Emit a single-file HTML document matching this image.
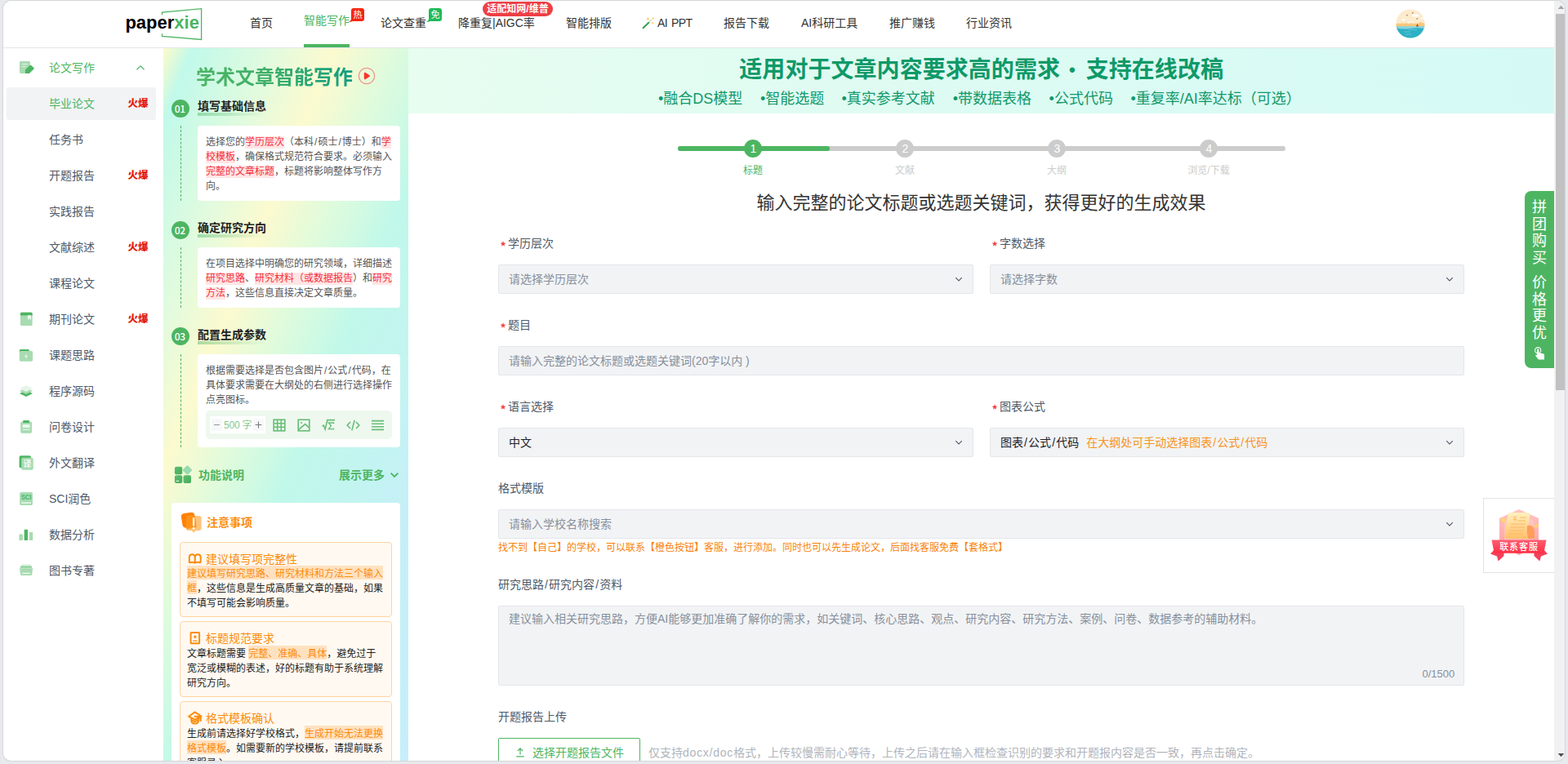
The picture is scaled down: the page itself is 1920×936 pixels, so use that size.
<!DOCTYPE html>
<html lang="zh-CN">
<head>
<meta charset="utf-8">
<title>paperxie 智能写作</title>
<style>
*{box-sizing:border-box;margin:0;padding:0}
html,body{width:1920px;height:936px;overflow:hidden}
body{background:#e7e9ec;font-family:"Liberation Sans","Noto Sans CJK SC",sans-serif;font-size:14px;color:#4e5969;position:relative}
.topline{position:absolute;left:0;top:0;width:1920px;height:1px;background:#d3d5d8}
.win{position:absolute;left:4px;top:1px;width:1912px;height:931px;background:#fff;border-radius:10px;overflow:hidden;box-shadow:0 0 0 1px #d5d6da}
.pg{position:absolute;left:-4px;top:-1px;width:1920px;height:936px}
.abs{position:absolute}
.t{position:absolute;white-space:nowrap;line-height:20px;height:20px}
/* header */
.hdr{position:absolute;left:0;top:0;width:1903px;height:59px;background:#fff;border-bottom:1px solid #e5e6eb}
.nav{position:absolute;top:18px;font-size:14px;line-height:20px;color:#333;white-space:nowrap}
.nav.on{color:#4db562;top:15px}
.logo{position:absolute;left:153.400px;top:14.500px;font-size:22px;line-height:26px;font-weight:700;color:#000;letter-spacing:0;white-space:nowrap}
.logo span{color:#4db562}
.badge{position:absolute;width:16px;height:16px;border-radius:3px;color:#fff;font-size:11px;line-height:16px;text-align:center;font-weight:400}
.pill{position:absolute;left:591px;top:2px;width:86px;height:18px;border-radius:9px;background:#ee3f45;color:#fff;font-size:12px;line-height:18px;text-align:center;font-weight:700;letter-spacing:0;white-space:nowrap}
/* sidebar */
.side{position:absolute;left:4px;top:59px;width:196px;height:873px;background:#fff}
.si{position:absolute;left:60px;font-size:14px;line-height:20px;color:#4e5969;white-space:nowrap}
.hot{position:absolute;left:156.500px;font-size:12.5px;line-height:20px;color:#e31b0f;font-weight:900;white-space:nowrap;letter-spacing:0}
.ico{position:absolute;left:23px;width:20px;height:20px}
/* scrollbar */
.sb{position:absolute;left:1903px;top:0;width:17px;height:936px;background:#f1f1f1}
.sb i{position:absolute;left:2px;top:17px;width:13px;height:461px;background:#c1c1c1}
</style>
</head>
<body>
<div class="win"><div class="pg">

<!-- HEADER -->
<div class="hdr">
  <svg class="abs" style="left:196px;top:8px" width="54" height="44" viewBox="0 0 54 44"><path d="M2.500 10.200V7L50.600 2.600V40.500L2.500 36.500V33.200" fill="none" stroke="#4db562" stroke-width="1.3"/></svg>
  <div class="logo">paper<span>xie</span></div>
  <div class="nav" style="left:306px">首页</div>
  <div class="nav on" style="left:372px">智能写作</div>
  <div class="abs" style="left:372px;top:54px;width:56px;height:4px;background:#4db562"></div>
  <div class="badge" style="left:430px;top:10px;background:#f5270f">热</div>
  <svg class="abs" style="left:426px;top:21px" width="8" height="6" viewBox="0 0 8 6"><path d="M4.500 0 L8 4.500 L0 6.500 Q4.500 4.500 4.500 0Z" fill="#f5270f"/></svg>
  <div class="nav" style="left:466px">论文查重</div>
  <div class="badge" style="left:525px;top:10px;background:#1fba5a">免</div>
  <svg class="abs" style="left:521px;top:21px" width="8" height="6" viewBox="0 0 8 6"><path d="M4.500 0 L8 4.500 L0 6.500 Q4.500 4.500 4.500 0Z" fill="#1fba5a"/></svg>
  <div class="nav" style="left:561px">降重复|AIGC率</div>
  <div class="pill">适配知网/维普</div>
  <div class="nav" style="left:693px">智能排版</div>
  <svg class="abs" style="left:786px;top:20px" width="16" height="16" viewBox="0 0 16 16">
    <path d="M1.600 14.200 8.400 7.600" stroke="#2fa04a" stroke-width="2" stroke-linecap="round"/>
    <path d="M8.800 7.200 12 4" stroke="#dedede" stroke-width="2.100" stroke-linecap="butt"/>
    <path d="M7.400 1.100l.6 1.400 1.400.6-1.400.6-.6 1.400-.6-1.400-1.400-.6 1.400-.6zM13.700.7l.5 1.200 1.200.5-1.200.5-.5 1.200-.5-1.200-1.200-.5 1.200-.5zM13 6.500l.5 1.100 1.100.5-1.100.5-.5 1.100-.5-1.100-1.100-.5 1.100-.5z" fill="#fbc53d"/>
  </svg>
  <div class="nav" style="left:805px;letter-spacing:-.6px;word-spacing:1.600px">AI PPT</div>
  <div class="nav" style="left:886px">报告下载</div>
  <div class="nav" style="left:981px">AI科研工具</div>
  <div class="nav" style="left:1089px">推广赚钱</div>
  <div class="nav" style="left:1183px">行业资讯</div>
  <svg class="abs" style="left:1709px;top:11px" width="36" height="36" viewBox="0 0 36 36">
    <defs><clipPath id="av"><circle cx="18" cy="18" r="17.6"/></clipPath></defs>
    <g clip-path="url(#av)">
      <rect width="36" height="36" fill="#fdebcd"/>
      <circle cx="18" cy="19" r="4.5" fill="#fff3df"/>
      <path d="M0 18.5 Q3 17 6 18 Q8 16.5 10 18 Q13 16.5 16 18 Q19 16.5 22 18 Q25 17 27 18 Q30 15 34 17.5 L36 18 V23 H0Z" fill="#fbc67a"/>
      <rect y="21" width="36" height="15" fill="#2bb1c6"/>
      <path d="M0 21 H36 V24 Q26 22.5 18 24 Q8 25.5 0 23Z" fill="#8ed3dc"/>
      <ellipse cx="24" cy="8" rx="4.5" ry="1.6" fill="#fff"/><ellipse cx="9.5" cy="13.2" rx="2.6" ry="1" fill="#fff"/><ellipse cx="32.5" cy="11.5" rx="2" ry=".9" fill="#fff"/>
      <path d="M25 21.5 l1.6-3.4 1.4 3.4z" fill="#a1491f"/>
      <path d="M13 8.3l1.6-1M20 5.3l1.6-1M25.5 12.4l1.6-1" stroke="#5a4a3a" stroke-width=".9"/>
      <path d="M10 28h8M16 25.5h10M12 31h7" stroke="#6cc7d4" stroke-width=".8"/>
    </g>
  </svg>
</div>

<!-- SIDEBAR -->
<div class="side"></div>
<div id="sidebar">
  <div class="abs" style="left:8px;top:107px;width:183px;height:40px;background:#f2f3f5;border-radius:3px"></div>
  <div class="si" style="top:73px;color:#4db562">论文写作</div>
  <svg class="abs" style="left:166px;top:78px" width="12" height="10" viewBox="0 0 12 10"><path d="M1.5 7.2 6 2.8l4.5 4.4" fill="none" stroke="#4db562" stroke-width="1.2"/></svg>
  <div class="si" style="top:117px;color:#4db562">毕业论文</div><div class="hot" style="top:117px">火爆</div>
  <div class="si" style="top:161px">任务书</div>
  <div class="si" style="top:205px">开题报告</div><div class="hot" style="top:205px">火爆</div>
  <div class="si" style="top:249px">实践报告</div>
  <div class="si" style="top:293px">文献综述</div><div class="hot" style="top:293px">火爆</div>
  <div class="si" style="top:337px">课程论文</div>
  <div class="si" style="top:381px">期刊论文</div><div class="hot" style="top:381px">火爆</div>
  <div class="si" style="top:425px">课题思路</div>
  <div class="si" style="top:469px">程序源码</div>
  <div class="si" style="top:513px">问卷设计</div>
  <div class="si" style="top:557px">外文翻译</div>
  <div class="si" style="top:601px">SCI润色</div>
  <div class="si" style="top:645px">数据分析</div>
  <div class="si" style="top:689px">图书专著</div>

  <svg class="abs" style="left:14px;top:64px" width="40" height="40" viewBox="0 0 40 40"><rect x="10" y="11" width="12.900" height="14.900" rx="1.400" fill="#a8dbb2"/><path d="M13 14.500h7M13 17.400h4.700" stroke="#e4f4e7" stroke-width="1"/><path d="M16.900 25.900V21.400L22.600 16.100Q23.500 15.500 24.400 16.200L27.600 19.300Q28.100 19.850 27.500 20.400L21.800 25.900Z" fill="#4db562"/></svg>
  <svg class="abs" style="left:14px;top:372px" width="40" height="40" viewBox="0 0 40 40"><rect x="10.900" y="10.700" width="14.700" height="16.200" rx="1.500" fill="#a8dbb2"/><path d="M10.900 14.500V12.200Q10.900 10.700 12.400 10.700H24.100Q25.600 10.700 25.600 12.200V14.500Z" fill="#4db562"/><path d="M19.900 14.200H23.900V19.800L21.900 18.600 19.900 19.800Z" fill="#edf8ef"/></svg>
  <svg class="abs" style="left:14px;top:416px" width="40" height="40" viewBox="0 0 40 40"><path d="M9.800 15V13.500Q9.800 12 11.300 12H20.500Q22 12 22 13.500V15Z" fill="#4db562"/><rect x="9.800" y="14.100" width="16.300" height="12.600" rx="1.600" fill="#a8dbb2"/><path d="M18.700 17 16 21h1.800l-.7 3.200 2.900-4.200h-1.900z" fill="#edf8ef"/></svg>
  <svg class="abs" style="left:14px;top:460px" width="40" height="40" viewBox="0 0 40 40"><path d="M10 22 18 18 26 22 18 26Z" fill="#4db562"/><path d="M10 19 18 15 26 19 18 23Z" fill="#a8dbb2"/><path d="M10 16 18 12 26 16 18 20Z" fill="#e6f5e9"/></svg>
  <svg class="abs" style="left:14px;top:504px" width="40" height="40" viewBox="0 0 40 40"><rect x="11.200" y="12.600" width="13.800" height="14.100" rx="1.600" fill="#a8dbb2"/><rect x="14.100" y="10.900" width="7.900" height="3" rx="1" fill="#4db562"/><rect x="13.700" y="16" width="8.900" height="3.900" fill="#eef8f0"/><rect x="13.700" y="21.800" width="8.900" height="1.100" fill="#eef8f0"/></svg>
  <svg class="abs" style="left:14px;top:548px" width="40" height="40" viewBox="0 0 40 40"><rect x="9.600" y="10.300" width="14.300" height="14.900" rx="1.800" fill="#4db562"/><rect x="12.200" y="12.800" width="14.500" height="15" rx="1.800" fill="#a8dbb2"/><text x="19.450" y="24" text-anchor="middle" font-size="10" font-weight="700" fill="#f2faf4" font-family="Liberation Sans, Noto Sans CJK SC, sans-serif">译</text></svg>
  <svg class="abs" style="left:14px;top:592px" width="40" height="40" viewBox="0 0 40 40"><rect x="10.200" y="11" width="15.700" height="15.900" rx="1.600" fill="#a8dbb2"/><text x="11.700" y="19.900" font-size="9.500" font-weight="700" fill="#4db562" textLength="12.700" lengthAdjust="spacingAndGlyphs" font-family="Liberation Sans, sans-serif">SCI</text><rect x="12.200" y="23.300" width="11.700" height="1.500" fill="#eef8f0"/></svg>
  <svg class="abs" style="left:14px;top:636px" width="40" height="40" viewBox="0 0 40 40"><rect x="9.400" y="18.400" width="4.500" height="7.500" rx=".6" fill="#a8dbb2"/><rect x="15.600" y="12.800" width="4.500" height="13.100" rx=".6" fill="#4db562"/><rect x="21.800" y="16" width="4.400" height="9.900" rx=".6" fill="#a8dbb2"/></svg>
  <svg class="abs" style="left:14px;top:680px" width="40" height="40" viewBox="0 0 40 40"><rect x="12" y="12" width="12.100" height="1.100" fill="#a8dbb2"/><rect x="10.700" y="13.900" width="14.500" height="1.300" rx=".6" fill="#4db562"/><path d="M10 16H26.100L25.200 23.700Q25 25 23.700 25H12.500Q11.200 25 11 23.700Z" fill="#a8dbb2"/><rect x="12.800" y="21.800" width="10.300" height="1.300" rx=".6" fill="#eef8f0"/></svg>

</div>


<!-- LEFT GUIDE PANEL -->
<style>
.pn{position:absolute;left:199.5px;top:59px;width:300.5px;height:873px;background:linear-gradient(112deg,#fdfbc9 0%,#c1f9ea 5.5%,#e2fbde 21%,#fcfacf 32%,#e0fbdc 43%,#d0fae3 50%,#c0f8ea 56%,#c3f5f0 68%,#c5f0f7 80%,#c7eefa 100%)}
.ptitle{position:absolute;left:240px;top:79px;font-size:24px;line-height:32px;font-weight:700;white-space:nowrap;background:linear-gradient(90deg,#4db562 0%,#3fae6a 45%,#0f9d82 100%);-webkit-background-clip:text;background-clip:text;color:transparent}
.num{position:absolute;left:210px;width:22px;height:22px;border-radius:50%;background:#4db562;color:#fff;font-size:12px;line-height:22px;text-align:center;letter-spacing:-.3px;font-family:"Noto Sans CJK SC","Liberation Sans",sans-serif;font-weight:500;padding-right:1.500px}
.stt{position:absolute;left:242px;font-size:14px;line-height:20px;font-weight:700;color:#222;white-space:nowrap}
.stu{position:absolute;left:242px;width:84px;height:4px;background:linear-gradient(90deg,rgba(77,181,98,.45),rgba(77,181,98,.12) 70%,rgba(77,181,98,0))}
.dash{position:absolute;left:221px;width:0;border-left:1px dashed #4db562}
.card{position:absolute;left:242px;width:248px;background:#fff;border-radius:4px;padding:11px 8px 9px 10px;font-size:12px;line-height:18px;color:#555}
.card b{font-weight:400;color:#f5313d;background:#ffe5e5;padding-bottom:1px}
.tool{position:absolute;left:252px;top:503px;width:228px;height:35px;background:#eef8ef;border-radius:5px}
.ncard{position:absolute;left:210px;top:616px;width:280px;height:330px;background:#fff;border-radius:4px}
.sub{position:absolute;left:220px;width:260px;background:#fff9f1;border:1px solid #ffd3a0;border-radius:4px}
.sub h4{position:absolute;left:31px;top:9.500px;font-size:14px;line-height:20px;font-weight:400;color:#fb8c0c;white-space:nowrap}
.sub p{position:absolute;left:8px;top:28.500px;width:242px;font-size:12px;line-height:18px;color:#222}
.sub p b{font-weight:400;color:#fb8c0c;background:#ffe1c0;padding-top:3px}
</style>
<div class="pn"></div>
<div class="ptitle">学术文章智能写作</div>
<svg class="abs" style="left:438px;top:82px" width="22" height="22" viewBox="0 0 22 22"><circle cx="11" cy="11" r="9.700" fill="none" stroke="#f0948a" stroke-width="1.300"/><path d="M9 8 13.600 11 9 14Z" fill="#fb352c" stroke="#fb352c" stroke-width="2.400" stroke-linejoin="round"/></svg>

<div class="num" style="top:122px">01</div>
<div class="stt" style="top:120px">填写基础信息</div><div class="stu" style="top:137.5px"></div>
<div class="dash" style="top:154px;height:92px"></div>
<div class="card" style="top:154px;height:92px">选择您的<b>学历层次</b>（本科<span style="margin:0 1px">/</span>硕士<span style="margin:0 1px">/</span>博士）和<b>学校模板</b>，确保格式规范符合要求。必须输入<b>完整的文章标题</b>，标题将影响整体写作方向。</div>

<div class="num" style="top:270.5px">02</div>
<div class="stt" style="top:269px">确定研究方向</div><div class="stu" style="top:286.5px"></div>
<div class="dash" style="top:303px;height:74px"></div>
<div class="card" style="top:303px;height:74px">在项目选择中明确您的研究领域，详细描述<b>研究思路</b>、<b>研究材料（或数据报告</b>）和<b>研究方法</b>，这些信息直接决定文章质量。</div>

<div class="num" style="top:401px">03</div>
<div class="stt" style="top:400px">配置生成参数</div><div class="stu" style="top:417.5px"></div>
<div class="dash" style="top:434px;height:114px"></div>
<div class="card" style="top:434px;height:114px">根据需要选择是否包含图片<span style="margin:0 1px">/</span>公式<span style="margin:0 1px">/</span>代码，在具体要求需要在大纲处的右侧进行选择操作点亮图标。</div>
<div class="tool"></div>
<div class="abs" style="left:257px;top:510px;width:68px;height:21px;background:#fff"></div>
<div class="abs" style="left:259px;top:513px;width:13px;height:15px;background:#f7f8fa"></div>
<div class="abs" style="left:310px;top:513px;width:13px;height:15px;background:#f7f8fa"></div>
<svg class="abs" style="left:261px;top:516px" width="9" height="9" viewBox="0 0 9 9"><path d="M1 4.5h7" stroke="#999" stroke-width="1.1"/></svg>
<svg class="abs" style="left:312px;top:516px" width="9" height="9" viewBox="0 0 9 9"><path d="M.6 4.5h7.8M4.5 .6v7.8" stroke="#777" stroke-width="1.1"/></svg>
<div class="t" style="left:274px;top:511px;font-size:12px;color:#84c98f;letter-spacing:-.2px">500 字</div>
<!-- toolbar icons -->
<svg class="abs" style="left:334px;top:513px" width="16" height="16" viewBox="0 0 16 16"><g fill="none" stroke="#67bd76" stroke-width="1.6"><rect x="1.2" y="1.2" width="13.6" height="13.6"/><path d="M1.2 5.7h13.6M1.2 10.3h13.6M5.7 1.2v13.6M10.3 1.2v13.6"/></g></svg>
<svg class="abs" style="left:364px;top:513px" width="16" height="16" viewBox="0 0 16 16"><g fill="none" stroke="#67bd76" stroke-width="1.6"><rect x="1.2" y="1.2" width="13.6" height="13.6"/><path d="M1.4 13.6 9.6 6.6l5.2 4.6"/></g><circle cx="5.2" cy="5" r="1.1" fill="#6dc07b"/></svg>
<svg class="abs" style="left:394px;top:513px" width="17" height="16" viewBox="0 0 17 16"><g fill="none" stroke="#67bd76" stroke-width="1.6"><path d="M.6 9 2.2 8.2 4.2 13 6.8 1.6H16"/><path d="M14.6 6.2V5H8.4l3 3.8-3 3.8h6.2v-1.2" stroke-width="1.3"/></g></svg>
<svg class="abs" style="left:424px;top:513px" width="17" height="16" viewBox="0 0 17 16"><g fill="none" stroke="#67bd76" stroke-width="1.6"><path d="M5 4 1.2 8 5 12M12 4l3.8 4L12 12M10.2 1.8 6.8 14.4"/></g></svg>
<svg class="abs" style="left:454px;top:513px" width="17" height="16" viewBox="0 0 17 16"><path d="M1 2.6h15M1 6.2h15M1 9.8h15M1 13.4h15" stroke="#67bd76" stroke-width="1.6"/></svg>

<!-- 功能说明 -->
<svg class="abs" style="left:213px;top:570px" width="23" height="24" viewBox="0 0 23 24">
  <defs><linearGradient id="gq" x1="0" y1="0" x2="1" y2="1"><stop offset="0" stop-color="#5cbd70"/><stop offset="1" stop-color="#45ad5b"/></linearGradient></defs>
  <rect x=".9" y="1.700" width="9.300" height="9.500" rx="2" fill="url(#gq)"/>
  <rect x=".9" y="12.300" width="9.300" height="9.700" rx="2" fill="url(#gq)"/>
  <rect x="11.500" y="12.300" width="9.500" height="9.700" rx="2" fill="url(#gq)"/>
  <rect x="12" y="1.500" width="8.800" height="8.800" rx="1.800" fill="#98dbae" transform="rotate(45 16.400 5.900)"/>
  <path d="M3.200 19.200h2.400" stroke="#fff" stroke-width="1.100" stroke-linecap="round"/>
</svg>
<div class="t" style="left:243px;top:572px;font-weight:700;color:#4db562">功能说明</div>
<div class="t" style="left:415px;top:572px;font-weight:700;color:#4db562">展示更多</div>
<svg class="abs" style="left:477px;top:577px" width="12" height="10" viewBox="0 0 12 10"><path d="M1.6 2.6 6 7l4.4-4.4" fill="none" stroke="#4db562" stroke-width="1.8"/></svg>

<!-- 注意事项 -->
<div class="ncard"></div>
<svg class="abs" style="left:221px;top:627px" width="27" height="27" viewBox="0 0 27 27">
  <rect x="1.600" y="1.300" width="16.500" height="17.500" rx="4" fill="#ff8206" transform="rotate(-9 10 10)"/>
  <path d="M10 5H22.600Q25.600 5 25.600 8V20Q25.600 23 22.600 23H18.800L16.200 25.700 13.600 23H10Q7 23 7 20V8Q7 5 10 5Z" fill="#ffb65e" fill-opacity=".82"/>
  <path d="M10 5H17.800L19.600 17.500Q19.800 19.400 18 19.700L7 21.200V8Q7 5 10 5Z" fill="#ff8a08" fill-opacity=".75"/>
  <path d="M16.100 8.200v8.400" stroke="#fff" stroke-width="2.300" stroke-linecap="round"/><circle cx="16.100" cy="20.200" r="1.350" fill="#fff"/>
</svg>
<div class="t" style="left:253px;top:630px;font-weight:700;color:#fb8c0c">注意事项</div>

<div class="sub" style="top:664px;height:92px">
  <svg class="abs" style="left:9px;top:10.500px" width="18" height="16" viewBox="0 0 18 16"><path d="M1.800 13.500V6.800Q1.800 3.300 5.300 3.300T8.750 6.800V13.500M8.750 6.800Q8.750 3.300 12.200 3.300T15.700 6.800V13.500M1.800 13.500Q5.300 12 8.750 13.700Q12.200 12 15.700 13.500" fill="none" stroke="#fb8c0c" stroke-width="2" stroke-linejoin="round"/></svg>
  <h4>建议填写项完整性</h4>
  <p><b>建议填写研究思路、研究材料和方法三个输入框</b>，这些信息是生成高质量文章的基础，如果不填写可能会影响质量。</p>
</div>
<div class="sub" style="top:761px;height:92.500px">
  <svg class="abs" style="left:10px;top:10.500px" width="16" height="18" viewBox="0 0 16 18"><rect x="2.600" y="2" width="10.500" height="13.200" rx=".6" fill="none" stroke="#fb8c0c" stroke-width="2"/><path d="M7.850 4.700l.75 1.500 1.650.25-1.200 1.150.3 1.650-1.500-.8-1.500.8.300-1.650-1.200-1.150 1.650-.25z" fill="#fb8c0c"/><path d="M5.200 12.200h5.300" stroke="#fb8c0c" stroke-width="1.300"/></svg>
  <h4>标题规范要求</h4>
  <p style="top:29.500px">文章标题需要 <b>完整、准确、具体</b>，避免过于宽泛或模糊的表述，好的标题有助于系统理解研究方向。</p>
</div>
<div class="sub" style="top:859px;height:92px">
  <svg class="abs" style="left:9px;top:10.500px" width="18" height="17" viewBox="0 0 18 17"><path d="M8.700 1.400 16.500 6.500 8.700 10.600 1.100 6.800ZM8.400 6.800H15.400M15.800 6.600V12M4.200 9.200V11Q4.200 15.600 8.700 15.600T13.300 11V9.200M6 11.600Q8.700 14.200 11.400 11.600" fill="none" stroke="#fb8c0c" stroke-width="2" stroke-linejoin="round" stroke-linecap="round"/></svg>
  <h4>格式模板确认</h4>
  <p style="top:30px">生成前请选择好学校格式，<b>生成开始无法更换格式模板</b>。如需要新的学校模板，请提前联系客服录入。</p>
</div>



<!-- MAIN -->
<style>
.ban{position:absolute;left:500px;top:59px;width:1403px;height:80px;background:linear-gradient(90deg,#e7fdf0 0%,#dcfbf3 55%,#d5faf6 100%)}
.ban h1{position:absolute;left:0;width:1403px;top:8px;text-align:center;font-size:28px;line-height:38px;font-weight:700;color:#0f9968;white-space:nowrap;letter-spacing:.05px}
.ban h2{position:absolute;left:0;width:1403px;top:49px;text-align:center;font-size:18px;line-height:26px;font-weight:400;color:#11986a;white-space:pre}
.stepc{position:absolute;top:171px;width:22px;height:22px;border-radius:50%;background:#ccc;color:#fff;font-size:14px;line-height:22px;text-align:center;padding-left:1px}
.stepl{position:absolute;top:200px;width:120px;text-align:center;font-size:12px;line-height:18px;color:#ccc;white-space:nowrap}
.big{position:absolute;left:500px;width:1403px;top:234px;text-align:center;font-size:22px;line-height:30px;color:#333;white-space:nowrap}
.lb{position:absolute;font-size:14px;line-height:20px;color:#4e5969;white-space:nowrap}
.lb i{position:absolute;left:-9.500px;top:7px;width:7px;height:7px;font-size:0;background:#f53f3f;clip-path:polygon(50% 0,62% 36%,100% 38%,70% 60%,80% 97%,50% 75%,20% 97%,30% 60%,0 38%,38% 36%)}
.inp{position:absolute;height:36px;background:#f2f3f5;border:1px solid #e5e6eb;border-radius:2px;font-size:14px;line-height:34px;padding-left:12px;color:#86909c;white-space:nowrap}
.inp svg{position:absolute;right:12px;top:12px}
</style>
<div class="ban">
  <h1 style="left:405.300px;width:auto;text-align:left">适用对于文章内容要求高的需求</h1><h1 style="left:805px;width:16px;font-size:22px">•</h1><h1 style="left:829.700px;width:auto;text-align:left">支持在线改稿</h1>
  <h2 style="left:306px;width:auto">•融合DS模型</h2><h2 style="left:431px;width:auto">•智能选题</h2><h2 style="left:530.400px;width:auto">•真实参考文献</h2><h2 style="left:666.700px;width:auto">•带数据表格</h2><h2 style="left:784.600px;width:auto">•公式代码</h2><h2 style="left:884.500px;width:auto">•重复率/AI率达标（可选）</h2>
</div>
<!-- steps -->
<div class="abs" style="left:830px;top:179px;width:744px;height:6px;border-radius:3px;background:#ccc"></div>
<div class="abs" style="left:830px;top:179px;width:186px;height:6px;border-radius:3px;background:#4db562"></div>
<div class="stepc" style="left:911px;background:#4db562">1</div>
<div class="stepc" style="left:1097px">2</div>
<div class="stepc" style="left:1283px">3</div>
<div class="stepc" style="left:1469px">4</div>
<div class="stepl" style="left:862px;color:#4db562">标题</div>
<div class="stepl" style="left:1048px">文献</div>
<div class="stepl" style="left:1234px">大纲</div>
<div class="stepl" style="left:1420px">浏览/下载</div>
<div class="big">输入完整的论文标题或选题关键词，获得更好的生成效果</div>

<!-- form -->
<div class="lb" style="left:622px;top:288px"><i>★</i>学历层次</div>
<div class="inp" style="left:610px;top:324px;width:582px">请选择学历层次<svg width="10" height="10" viewBox="0 0 10 10"><path d="M1.2 3.200 5 7l3.800-3.800" fill="none" stroke="#4e5969" stroke-width="1.100"/></svg></div>
<div class="lb" style="left:1224px;top:288px"><i>★</i>字数选择</div>
<div class="inp" style="left:1212px;top:324px;width:581px">请选择字数<svg width="10" height="10" viewBox="0 0 10 10"><path d="M1.2 3.200 5 7l3.800-3.800" fill="none" stroke="#4e5969" stroke-width="1.100"/></svg></div>

<div class="lb" style="left:622px;top:388px"><i>★</i>题目</div>
<div class="inp" style="left:610px;top:424px;width:1183px">请输入完整的论文标题或选题关键词(20字以内 )</div>

<div class="lb" style="left:622px;top:488px"><i>★</i>语言选择</div>
<div class="inp" style="left:610px;top:524px;width:582px;color:#1d2129">中文<svg width="10" height="10" viewBox="0 0 10 10"><path d="M1.2 3.200 5 7l3.800-3.800" fill="none" stroke="#4e5969" stroke-width="1.100"/></svg></div>
<div class="lb" style="left:1224px;top:488px"><i>★</i>图表公式</div>
<div class="inp" style="left:1212px;top:524px;width:581px;color:#1d2129">图表<span style="margin:0 1.100px">/</span>公式<span style="margin:0 1.100px">/</span>代码<span style="color:#f7931e;margin-left:9px;font-size:14px">在大纲处可手动选择图表<span style="margin:0 1.100px">/</span>公式<span style="margin:0 1.100px">/</span>代码</span><svg width="10" height="10" viewBox="0 0 10 10"><path d="M1.2 3.200 5 7l3.800-3.800" fill="none" stroke="#4e5969" stroke-width="1.100"/></svg></div>

<div class="lb" style="left:610px;top:588px">格式模版</div>
<div class="inp" style="left:610px;top:624px;width:1183px">请输入学校名称搜索<svg width="10" height="10" viewBox="0 0 10 10"><path d="M1.2 3.200 5 7l3.800-3.800" fill="none" stroke="#4e5969" stroke-width="1.100"/></svg></div>
<div class="t" style="left:610px;top:661px;font-size:12px;color:#f7820e">找不到【自己】的学校，可以联系【橙色按钮】客服，进行添加。同时也可以先生成论文，后面找客服免费【套格式】</div>

<div class="lb" style="left:610px;top:706px">研究思路<span style="margin:0 1.100px">/</span>研究内容<span style="margin:0 1.100px">/</span>资料</div>
<div class="inp" style="left:610px;top:742px;width:1183px;height:98px;line-height:22px;padding-top:4px;font-size:14px">建议输入相关研究思路，方便AI能够更加准确了解你的需求，如关键词、核心思路、观点、研究内容、研究方法、案例、问卷、数据参考的辅助材料。</div>
<div class="t" style="left:1741.500px;top:816px;font-size:13px;color:#86909c">0/1500</div>

<div class="lb" style="left:610px;top:868px">开题报告上传</div>
<div class="abs" style="left:610px;top:904px;width:174px;height:36px;border:1px solid #4db562;border-radius:2px;background:#fff"></div>
<svg class="abs" style="left:631px;top:915px" width="12" height="13" viewBox="0 0 12 13"><path d="M6 9.500V2M2.800 5 6 1.800 9.200 5M1.200 11.800h9.600" fill="none" stroke="#4db562" stroke-width="1.200"/></svg>
<div class="t" style="left:652px;top:912px;color:#4db562">选择开题报告文件</div>
<div class="t" style="left:794px;top:912px;color:#b0b4bb">仅支持<span style="letter-spacing:.75px">docx/doc</span>格式，上传较慢需耐心等待，上传之后请在输入框检查识别的要求和开题报内容是否一致，再点击确定。</div>



<!-- FLOATING -->
<div class="abs" style="left:1867px;top:234px;width:36px;height:217px;background:#4db562;border-radius:8px 0 0 8px"></div>
<div class="abs" style="left:1876px;top:244px;width:18px;font-size:18px;line-height:20.500px;color:#fff;text-align:center">拼团购买</div>
<div class="abs" style="left:1876px;top:336px;width:18px;font-size:18px;line-height:20.500px;color:#fff;text-align:center">价格更优</div>
<svg class="abs" style="left:1877px;top:424px" width="16" height="18" viewBox="0 0 16 18"><circle cx="6.200" cy="5.200" r="3.600" fill="none" stroke="#fff" stroke-width="1.100"/><path d="M5 4.600Q5 3.400 6.200 3.400T7.400 4.600V8.200L12.600 9.200Q14 9.600 14 11V16.500H6.800L3.400 12Q2.800 10.800 4 10.600L5 11.400Z" fill="#fff"/></svg>

<div class="abs" style="left:1816px;top:610px;width:90px;height:92px;border:1px solid #e3e3e3;background:#fff"></div>
<svg class="abs" style="left:1824px;top:622px" width="72" height="68" viewBox="0 0 72 68">
  <defs><linearGradient id="hx" x1="0" y1="0" x2="0" y2="1"><stop offset="0" stop-color="#ff9d94"/><stop offset="1" stop-color="#ff5a66"/></linearGradient>
  <linearGradient id="rb" x1="0" y1="0" x2="0" y2="1"><stop offset="0" stop-color="#ff5d72"/><stop offset="1" stop-color="#ff2f45"/></linearGradient>
  <linearGradient id="pp" x1="0" y1="0" x2="0" y2="1"><stop offset="0" stop-color="#fff0c0"/><stop offset="1" stop-color="#ffc06a"/></linearGradient></defs>
  <path d="M36 2 60 13V45L36 58 12 45V13Z" fill="url(#hx)" opacity=".6"/>
  <path d="M36 7 54 16V41L36 52 18 41V16Z" fill="#ffd0c8" opacity=".55"/>
  <path d="M25 6H47Q50 6 49.500 9L46 30Q45.500 34 47 38H21Q18 38 18.500 34L22 10Q22.500 6 25 6Z" fill="url(#pp)"/>
  <path d="M46 22Q54 20 55 29V38H47Q45 30 46 22Z" fill="#ff9d5a"/>
  <path d="M29 10l2 3 2-3M31 13v4M29 14.500h4M37 12h8M34 16h10M26 20h18M25 24h18M24 28h18M23 32h18" stroke="#ffb763" stroke-width="1" fill="none"/>
  <path d="M17 11l1.200 2.400 2.600.400-1.900 1.800.5 2.600L17 17l-2.400 1.200.5-2.600-1.900-1.800 2.600-.4zM57 19l1 2 2.200.3-1.600 1.500.4 2.200L57 24l-2 1 .4-2.200-1.600-1.500 2.200-.3z" fill="#ffd76a"/>
  <path d="M1 56.500 6 51H17.500V59L10.700 65.500 9 59.500Z" fill="#f4405a"/><path d="M71 56.500 66 51H54.500V59L61.300 65.500 63 59.500Z" fill="#f4405a"/>
  <path d="M2.500 39.500H69.500L66.300 55.800H5.700Z" fill="url(#rb)"/>
  <text x="36" y="51.500" text-anchor="middle" font-size="11" font-weight="500" fill="#fff" letter-spacing=".9" font-family="Liberation Sans, Noto Sans CJK SC, sans-serif">联系客服</text>
</svg>


<!-- SCROLLBAR -->
<div class="sb"><i></i>
  <svg class="abs" style="left:4px;top:6px" width="9" height="6" viewBox="0 0 9 6"><path d="M4.5 .8 8.3 5H.7z" fill="#a3a3a3"/></svg>
  <svg class="abs" style="left:4px;top:922px" width="9" height="6" viewBox="0 0 9 6"><path d="M.7 1h7.6L4.5 5.2z" fill="#505050"/></svg>
</div>
</div></div>
</body>
</html>
